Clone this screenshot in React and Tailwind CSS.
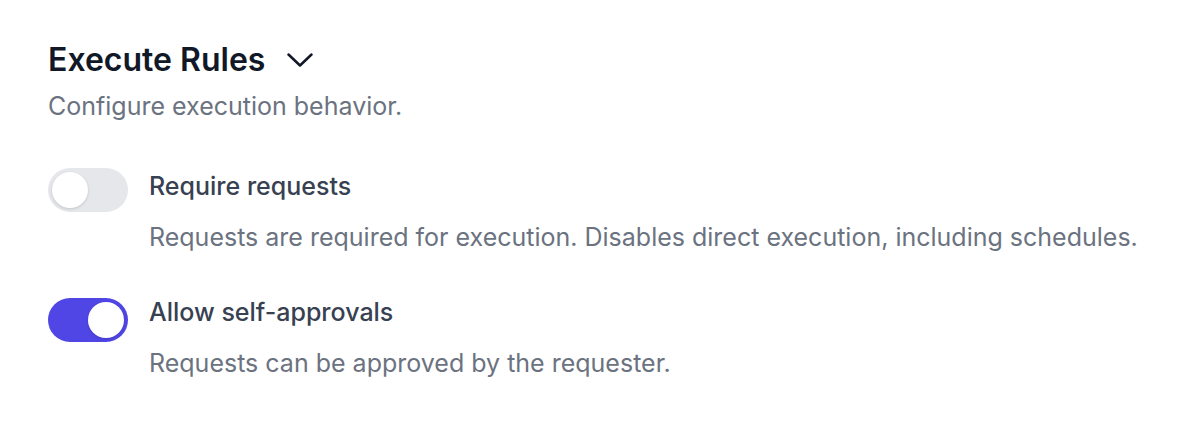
import { useState } from 'react';

function Toggle({ checked, onChange, className = '' }) {
    return (
        <button
            type="button"
            role="switch"
            aria-checked={checked}
            onClick={() => onChange(!checked)}
            className={`relative inline-flex h-[44px] w-[80px] shrink-0 items-center rounded-full p-[4px] transition-colors ${checked ? 'bg-[#4f46e5]' : 'bg-[#e5e7eb]'} ${className}`}
        >
            <span
                className={`block h-[36px] w-[36px] rounded-full bg-white shadow-[0_1px_3px_rgba(0,0,0,0.15)] transition-transform ${checked ? 'translate-x-[36px]' : 'translate-x-0'}`}
            />
        </button>
    );
}

export default function App() {
    const [requireRequests, setRequireRequests] = useState(false);
    const [selfApprovals, setSelfApprovals] = useState(true);

    return (
        <div className="min-h-screen bg-white px-[48px] pt-[40px] font-['Inter',sans-serif]">
            <div className="flex items-center gap-[22px]">
                <h2 className="text-[32px] font-semibold leading-[40px] text-[#111827]">Execute Rules</h2>
                <svg width="26" height="14" viewBox="0 0 26 14" fill="none" stroke="#111827" strokeWidth="2.5" strokeLinecap="round" strokeLinejoin="round">
                    <path d="M1.5 1.5 13 12.5 24.5 1.5" />
                </svg>
            </div>
            <p className="mt-[10px] text-[25px] leading-[32px] text-[#6b7280]">Configure execution behavior.</p>

            <div className="mt-[46px] flex flex-col gap-[41px]">
                <div className="flex gap-[21px]">
                    <Toggle checked={requireRequests} onChange={setRequireRequests} />
                    <div>
                        <div className="text-[25px] font-medium leading-[36px] text-[#374151]">Require requests</div>
                        <p className="mt-[17px] whitespace-nowrap text-[25px] leading-[32px] text-[#6b7280]">
                            Requests are required for execution. Disables direct execution, including schedules.
                        </p>
                    </div>
                </div>
                <div className="flex gap-[21px]">
                    <Toggle checked={selfApprovals} onChange={setSelfApprovals} className="mt-[4px]" />
                    <div>
                        <div className="text-[25px] font-medium leading-[36px] text-[#374151]">Allow self-approvals</div>
                        <p className="mt-[17px] whitespace-nowrap text-[25px] leading-[32px] text-[#6b7280]">
                            Requests can be approved by the requester.
                        </p>
                    </div>
                </div>
            </div>
        </div>
    );
}
